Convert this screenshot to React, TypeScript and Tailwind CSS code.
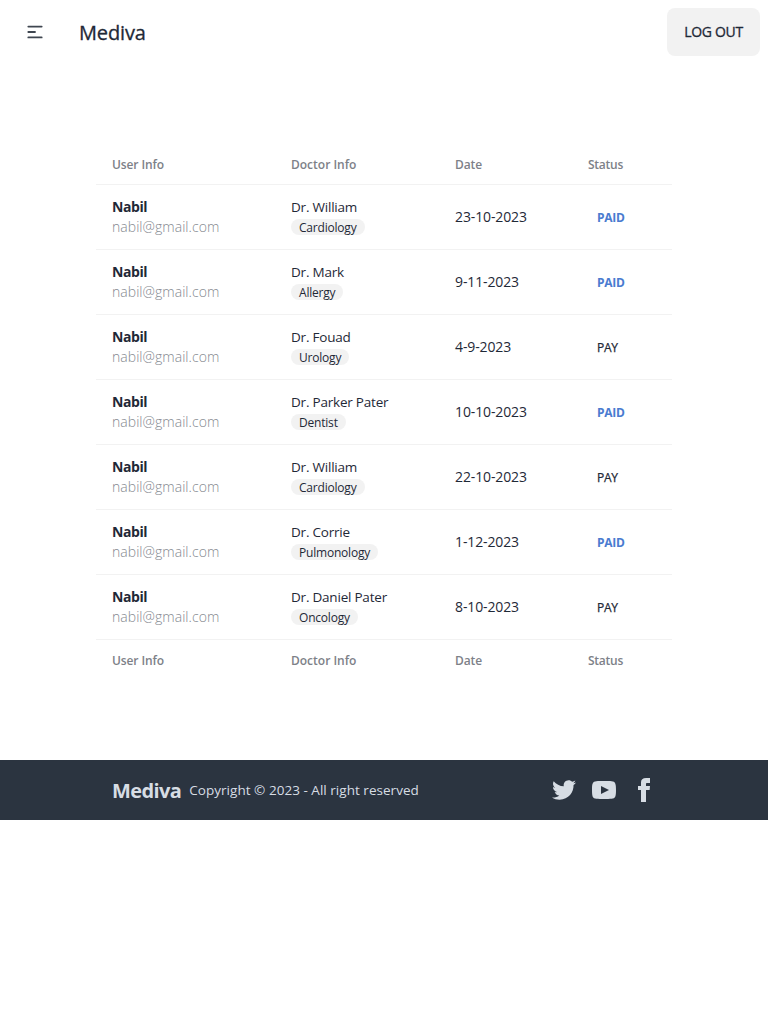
const rows = [
  { doctor: 'Dr. William', field: 'Cardiology', date: '23-10-2023', paid: true },
  { doctor: 'Dr. Mark', field: 'Allergy', date: '9-11-2023', paid: true },
  { doctor: 'Dr. Fouad', field: 'Urology', date: '4-9-2023', paid: false },
  { doctor: 'Dr. Parker Pater', field: 'Dentist', date: '10-10-2023', paid: true },
  { doctor: 'Dr. William', field: 'Cardiology', date: '22-10-2023', paid: false },
  { doctor: 'Dr. Corrie', field: 'Pulmonology', date: '1-12-2023', paid: true },
  { doctor: 'Dr. Daniel Pater', field: 'Oncology', date: '8-10-2023', paid: false },
];

function HeadingRow() {
  return (
    <tr className="h-[41px] text-left text-[12px] leading-4 tracking-[-0.1px] text-[#7d8188]">
      <th className="pt-[3px] pl-4 font-semibold">User Info</th>
      <th className="pt-[3px] pl-4 font-semibold tracking-[0px]">Doctor Info</th>
      <th className="pt-[3px] pl-4 font-semibold">Date</th>
      <th className="pt-[3px] pl-4 font-semibold tracking-[-0.25px]">Status</th>
    </tr>
  );
}

export default function App() {
  return (
    <div className="min-h-screen bg-white font-['Open_Sans','Noto_Sans',sans-serif] text-[#1f2937]">
      <header className="flex h-16 items-center justify-between p-2">
        <div className="flex items-center">
          <button className="ml-[17px] h-5 w-5" aria-label="Menu">
            <svg className="h-5 w-5" fill="none" viewBox="0 0 24 24" stroke="#3f4650" strokeWidth="2.2" strokeLinecap="round">
              <path d="M4 5.5h16M4 12h8M4 18.5h16" />
            </svg>
          </button>
          <span className="ml-[34px] pt-0.5 text-[20px] font-medium leading-7 tracking-[-0.15px] [-webkit-text-stroke:0.3px]">Mediva</span>
        </div>
        <button className="h-12 w-[93px] rounded-lg bg-[#f2f2f2] pb-0.5 text-[14px] font-medium tracking-[-0.3px] [-webkit-text-stroke:0.3px]">LOG OUT</button>
      </header>

      <main className="h-[696px] px-24 pt-[79px]">
        <table className="w-[576px] table-fixed border-collapse">
          <colgroup>
            <col className="w-[179px]" />
            <col className="w-[164px]" />
            <col className="w-[133px]" />
            <col className="w-[100px]" />
          </colgroup>
          <thead>
            <HeadingRow />
          </thead>
          <tbody>
            {rows.map((row) => (
              <tr key={row.date} className="h-[65px] border-t border-[#f2f2f2] text-[14px] leading-5">
                <td className="pl-4">
                  <div className="font-bold tracking-[-0.4px]">Nabil</div>
                  <div className="font-light tracking-[0.04px] text-[#85898f]">nabil@gmail.com</div>
                </td>
                <td className="pl-4">
                  <div className="text-[13.5px] tracking-[-0.2px] [word-spacing:-0.1px]">{row.doctor}</div>
                  <div className="flex h-5 items-center">
                    <span className="flex h-4 items-center rounded-full bg-[#f2f2f2] px-2 pt-0.5 text-[12px] leading-[14px] tracking-[-0.2px]">{row.field}</span>
                  </div>
                </td>
                <td className="pl-4 tracking-[-0.12px]">{row.date}</td>
                <td className="pt-0.5 pl-[25px] text-[12px] leading-4 tracking-[-0.25px]">
                  {row.paid ? (
                    <span className="font-bold text-[#4a7bd0]">PAID</span>
                  ) : (
                    <button className="font-medium [-webkit-text-stroke:0.25px]">PAY</button>
                  )}
                </td>
              </tr>
            ))}
          </tbody>
          <tfoot className="border-t border-[#f2f2f2]">
            <HeadingRow />
          </tfoot>
        </table>
      </main>

      <footer className="flex h-[60px] items-center justify-between bg-[#2b3440] px-28 text-[#d7dde4]">
        <div className="flex items-center gap-2">
          <span className="pt-0.5 text-[20px] font-bold leading-7 tracking-[-0.6px]">Mediva</span>
          <span className="text-[13.5px] leading-5 tracking-[0.03px]">Copyright © 2023 - All right reserved</span>
        </div>
        <div className="flex items-center gap-4">
          <svg className="h-6 w-6 fill-current" viewBox="0 0 24 24">
            <path d="M24 4.557c-.883.392-1.832.656-2.828.775 1.017-.609 1.798-1.574 2.165-2.724-.951.564-2.005.974-3.127 1.195-.897-.957-2.178-1.555-3.594-1.555-3.179 0-5.515 2.966-4.797 6.045-4.091-.205-7.719-2.165-10.148-5.144-1.29 2.213-.669 5.108 1.523 6.574-.806-.026-1.566-.247-2.229-.616-.054 2.281 1.581 4.415 3.949 4.89-.693.188-1.452.232-2.224.084.626 1.956 2.444 3.379 4.6 3.419-2.07 1.623-4.678 2.348-7.29 2.04 2.179 1.397 4.768 2.212 7.548 2.212 9.142 0 14.307-7.721 13.995-14.646.962-.695 1.797-1.562 2.457-2.549z" />
          </svg>
          <svg className="h-6 w-6 fill-current" viewBox="0 0 24 24">
            <path d="M19.615 3.184c-3.604-.246-11.631-.245-15.23 0-3.897.266-4.356 2.62-4.385 8.816.029 6.185.484 8.549 4.385 8.816 3.6.245 11.626.246 15.23 0 3.897-.266 4.356-2.62 4.385-8.816-.029-6.185-.484-8.549-4.385-8.816zm-10.615 12.816v-8l8 3.993-8 4.007z" />
          </svg>
          <svg className="h-6 w-6 fill-current" viewBox="0 0 24 24">
            <path d="M9 8h-3v4h3v12h5v-12h3.642l.358-4h-4v-1.667c0-.955.192-1.333 1.115-1.333h2.885v-5h-3.808c-3.596 0-5.192 1.583-5.192 4.615v3.385z" />
          </svg>
        </div>
      </footer>
    </div>
  );
}
